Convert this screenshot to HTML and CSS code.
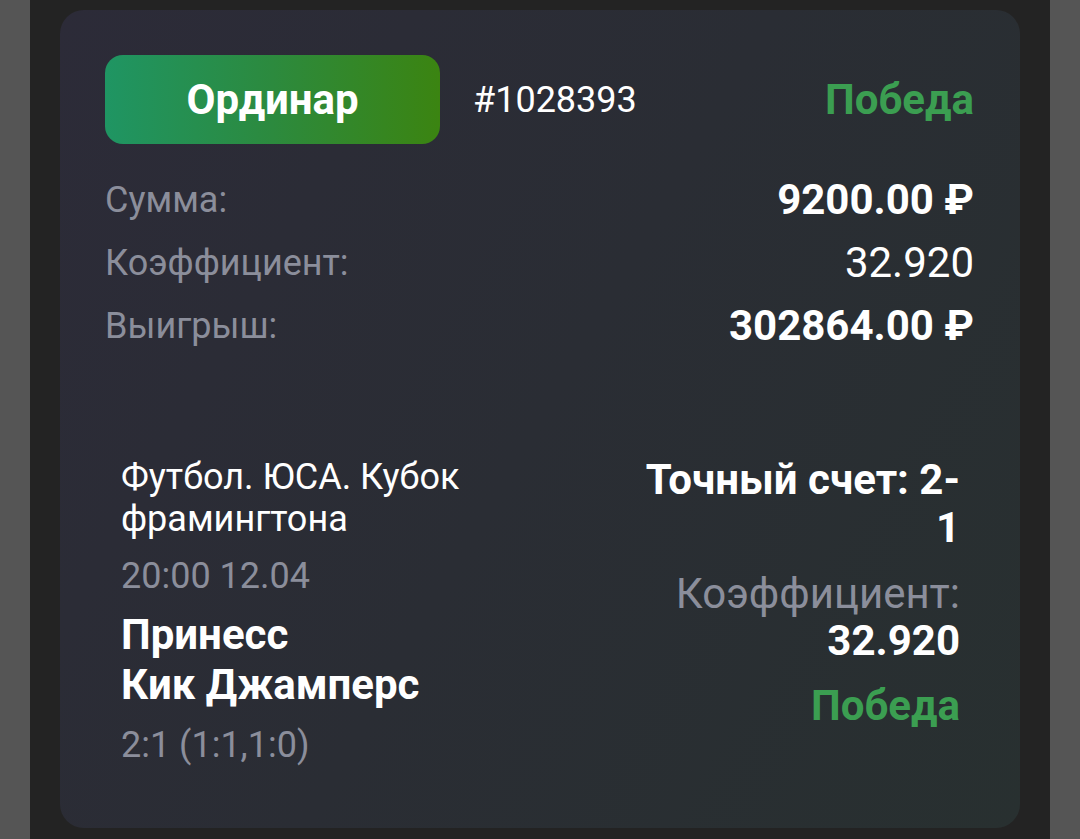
FILE: index.html
```html
<!DOCTYPE html>
<html lang="ru">
<head>
<meta charset="utf-8">
<link rel="stylesheet" href="styles.css">
</head>
<body>
<div class="page">
  <div class="card">
    <div class="head">
      <div class="type">Ординар</div>
      <div class="num">#1028393</div>
      <div class="status">Победа</div>
    </div>
    <div class="rows">
      <div class="row"><span class="label">Сумма:</span><span class="val bold">9200.00 ₽</span></div>
      <div class="row"><span class="label">Коэффициент:</span><span class="val">32.920</span></div>
      <div class="row"><span class="label">Выигрыш:</span><span class="val bold">302864.00 ₽</span></div>
    </div>
    <div class="bet">
      <div class="left">
        <div class="league">Футбол. ЮСА. Кубок фрамингтона</div>
        <div class="time">20:00 12.04</div>
        <div class="teams">Принесс<br>Кик Джамперс</div>
        <div class="score">2:1 (1:1,1:0)</div>
      </div>
      <div class="right">
        <div class="outcome">Точный счет: 2-1</div>
        <div class="klabel">Коэффициент:</div>
        <div class="kval">32.920</div>
        <div class="win">Победа</div>
      </div>
    </div>
  </div>
</div>
</body>
</html>
```
FILE: styles.css
```css
* { box-sizing: border-box; }
html, body { margin: 0; padding: 0; }
body {
  background: #555555;
  font-family: Roboto, "Noto Sans", sans-serif;
  color: #ffffff;
}
.page {
  margin: 0 30px;
  height: 839px;
  background: #232323;
  padding: 10px 30px 11px;
}
.card {
  height: 818px;
  border-radius: 24px;
  background: linear-gradient(120deg, #2c2b38 0%, #2a2d34 50%, #283030 100%);
  padding: 45px 46px 0 45px;
}
.head {
  display: flex;
  align-items: center;
  height: 89px;
}
.type {
  width: 335px;
  height: 89px;
  border-radius: 18px;
  background: linear-gradient(90deg, #1f9563 0%, #2c8a3e 50%, #3b8411 100%);
  display: flex;
  align-items: center;
  justify-content: center;
  font-weight: 700;
  font-size: 42px;
}
.num {
  margin-left: 33px;
  font-size: 36px;
  flex: 1;
}
.status {
  color: #3b9e51;
  font-weight: 700;
  font-size: 42px;
}
.rows {
  margin-top: 24px;
}
.row {
  display: flex;
  justify-content: space-between;
  align-items: center;
  height: 63px;
}
.label {
  color: #8b8e9b;
  font-size: 36px;
}
.val {
  font-size: 42px;
}
.bold { font-weight: 700; }
.bet {
  display: flex;
  justify-content: space-between;
  margin-top: 99px;
  padding: 0 14px 0 16px;
}
.left {
  width: 380px;
}
.league {
  font-size: 36px;
  line-height: 42px;
}
.time {
  margin-top: 15px;
  font-size: 36px;
  line-height: 42px;
  color: #8b8e9b;
}
.teams {
  margin-top: 13px;
  font-size: 42px;
  line-height: 50px;
  font-weight: 700;
}
.score {
  margin-top: 14px;
  font-size: 36px;
  line-height: 42px;
  color: #8b8e9b;
}
.right {
  width: 320px;
  text-align: right;
}
.outcome {
  font-size: 42px;
  line-height: 48px;
  font-weight: 700;
}
.klabel {
  margin-top: 18px;
  font-size: 42px;
  line-height: 48px;
  color: #8b8e9b;
}
.kval {
  font-size: 42px;
  line-height: 46px;
  font-weight: 700;
}
.win {
  margin-top: 21px;
  font-size: 42px;
  line-height: 42px;
  font-weight: 700;
  color: #3b9e51;
}
```
